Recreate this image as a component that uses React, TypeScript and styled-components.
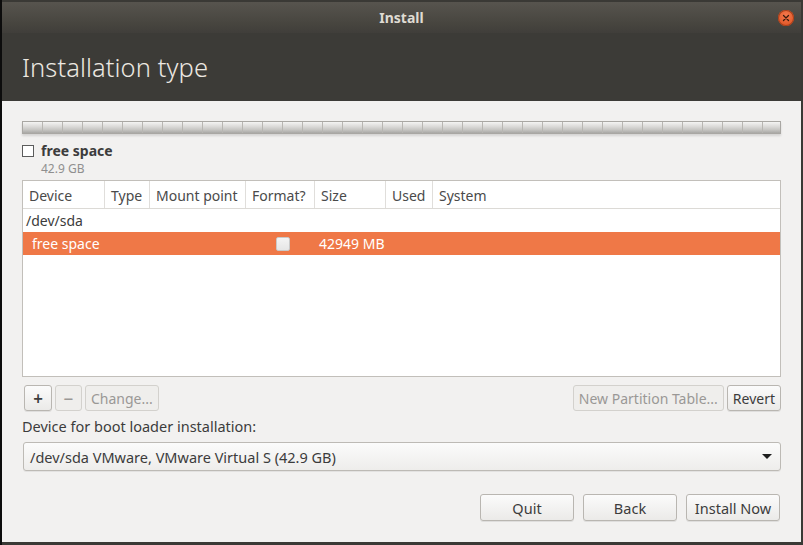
import React from "react";
import styled, { createGlobalStyle } from "styled-components";

const Global = createGlobalStyle`
  html, body { margin: 0; padding: 0; background: #3c3b37; }
  body { font-family: "Noto Sans", "Open Sans", sans-serif; }
  * { box-sizing: border-box; }
`;

const Frame = styled.div`
  width: 803px;
  height: 545px;
  background: #3a3935;
  border-left: 2px solid #0c0c0c;
  padding: 2px 2px 3px 0;
  display: flex;
  flex-direction: column;
  overflow: hidden;
`;

const Window = styled.div`
  flex: 1;
  display: flex;
  flex-direction: column;
  background: #f2f1f0;
`;

const TitleBar = styled.div`
  height: 31px;
  background: linear-gradient(#57544e, #47453f 70%, #403e3a);
  display: flex;
  align-items: center;
  justify-content: center;
  position: relative;
  color: #dfdbd2;
  font-weight: bold;
  font-size: 14px;
`;

const CloseBtn = styled.div`
  position: absolute;
  right: 7px;
  top: 8px;
  width: 16px;
  height: 16px;
  border-radius: 50%;
  background: radial-gradient(circle at 50% 35%, #f47a4e, #e35a2a 70%);
  box-shadow: 0 0 0 1px #a7401c inset;
  display: flex;
  align-items: center;
  justify-content: center;
`;

const Header = styled.div`
  height: 68px;
  background: #3c3b37;
  padding: 17px 20px 0;
  color: #ece8e1;
  font-size: 25.5px;
  font-weight: 300;
  letter-spacing: 0.1px;
`;

const Content = styled.div`
  flex: 1;
  padding: 20px 20px 0 20px;
  display: flex;
  flex-direction: column;
`;

const PartBar = styled.div`
  height: 13px;
  border: 1px solid #a9a7a3;
  background-image:
    repeating-linear-gradient(90deg, transparent 0, transparent 19px, #b8b6b2 19px, #b8b6b2 20px),
    linear-gradient(#f4f4f3, #dcdbd9 40%, #c7c6c3 70%, #a9a8a5);
  box-shadow: 0 2px 2px rgba(0, 0, 0, 0.12);
`;

const Legend = styled.div`
  margin-top: 7px;
  display: flex;
  gap: 7px;
`;

const LegendBox = styled.div`
  width: 12px;
  height: 12px;
  border: 1px solid #5c5c5c;
  background: #fff;
  margin-top: 4px;
`;

const LegendText = styled.div`
  display: flex;
  flex-direction: column;
`;

const LegendName = styled.div`
  font-weight: bold;
  font-size: 14px;
  color: #3c3c3c;
  line-height: 20px;
`;

const LegendSize = styled.div`
  font-size: 12px;
  color: #8f8f8f;
  line-height: 17px;
  margin-top: -1px;
`;

const Table = styled.div`
  margin-top: 3px;
  height: 197px;
  border: 1px solid #c2bfba;
  background: #fff;
`;

const cols = "82px 45px 96px 69px 71px 47px 1fr";

const HeadRow = styled.div`
  height: 28px;
  display: grid;
  grid-template-columns: ${cols};
  border-bottom: 1px solid #dcdad6;
`;

const HeadCell = styled.div<{ $last?: boolean }>`
  font-size: 14px;
  color: #4a4a4a;
  padding: 5px 0 0 6px;
  border-right: ${(p) => (p.$last ? "none" : "1px solid #e0dedb")};
  white-space: nowrap;
`;

const Row = styled.div<{ $sel?: boolean }>`
  height: 23px;
  display: grid;
  grid-template-columns: ${cols};
  align-items: center;
  font-size: 14px;
  background: ${(p) => (p.$sel ? "#ef7847" : "transparent")};
  color: ${(p) => (p.$sel ? "#ffffff" : "#3c3c3c")};
`;

const Cell = styled.div<{ $pad?: number; $center?: boolean }>`
  padding-left: ${(p) => p.$pad ?? 4}px;
  white-space: nowrap;
  display: flex;
  justify-content: ${(p) => (p.$center ? "center" : "flex-start")};
`;

const Wide = styled.div`
  grid-column: 1 / -1;
  padding-left: 3px;
`;

const RowCheck = styled.div`
  width: 14px;
  height: 14px;
  border: 1px solid #c9c9c9;
  border-radius: 2px;
  background: linear-gradient(#f4f4f4, #e6e6e6);
`;

const ToolRow = styled.div`
  margin-top: 8px;
  display: flex;
  align-items: center;
  gap: 3px;
  padding-left: 2px;
`;

const Spacer = styled.div`
  flex: 1;
`;

const SmallBtn = styled.button<{ $disabled?: boolean; $w?: number; $big?: boolean }>`
  height: 26px;
  min-width: ${(p) => p.$w ?? 0}px;
  padding: 0 5px;
  font-family: inherit;
  font-size: ${(p) => (p.$big ? 17 : 14)}px;
  font-weight: ${(p) => (p.$big ? 600 : 400)};
  border-radius: 3px;
  border: 1px solid ${(p) => (p.$disabled ? "#d3d1cd" : "#b9b6b1")};
  background: ${(p) =>
    p.$disabled ? "#efeeec" : "linear-gradient(#fbfbfb, #ebeae8)"};
  color: ${(p) => (p.$disabled ? "#9a9896" : "#3c3c3c")};
  box-shadow: ${(p) => (p.$disabled ? "none" : "0 1px 0 rgba(0,0,0,0.08)")};
  display: flex;
  align-items: center;
  justify-content: center;
`;

const Label = styled.div`
  margin-top: 5px;
  font-size: 14.5px;
  color: #3c3c3c;
`;

const Combo = styled.div`
  margin-top: 6px;
  margin-left: 1px;
  height: 29px;
  border: 1px solid #bdbab5;
  border-radius: 3px;
  background: linear-gradient(#fbfbfb, #eeedeb);
  display: flex;
  align-items: center;
  padding: 0 8px 0 6px;
  font-size: 14.5px;
  color: #3c3c3c;
  box-shadow: 0 1px 0 rgba(0,0,0,0.06);
`;

const Arrow = styled.div`
  width: 0;
  height: 0;
  border-left: 5px solid transparent;
  border-right: 5px solid transparent;
  border-top: 5px solid #1e1e1e;
`;

const Footer = styled.div`
  margin-top: 23px;
  display: flex;
  justify-content: flex-end;
  gap: 9px;
  padding-right: 1px;
`;

const FootBtn = styled.button`
  width: 94px;
  height: 27px;
  font-family: inherit;
  font-size: 14.5px;
  color: #3c3c3c;
  border-radius: 3px;
  border: 1px solid #b9b6b1;
  background: linear-gradient(#fbfbfb, #ebeae8);
  box-shadow: 0 1px 0 rgba(0,0,0,0.08);
`;

export default function App() {
  return (
    <>
      <Global />
      <Frame>
        <Window>
          <TitleBar>
            Install
            <CloseBtn>
              <svg width="8" height="8" viewBox="0 0 8 8">
                <path d="M1.5 1.5 L6.5 6.5 M6.5 1.5 L1.5 6.5" stroke="#3a1a0c" strokeWidth="1.3" strokeLinecap="round" />
              </svg>
            </CloseBtn>
          </TitleBar>
          <Header>Installation type</Header>
          <Content>
            <PartBar />
            <Legend>
              <LegendBox />
              <LegendText>
                <LegendName>free space</LegendName>
                <LegendSize>42.9 GB</LegendSize>
              </LegendText>
            </Legend>
            <Table>
              <HeadRow>
                <HeadCell>Device</HeadCell>
                <HeadCell>Type</HeadCell>
                <HeadCell>Mount point</HeadCell>
                <HeadCell>Format?</HeadCell>
                <HeadCell>Size</HeadCell>
                <HeadCell>Used</HeadCell>
                <HeadCell $last>System</HeadCell>
              </HeadRow>
              <Row>
                <Wide>/dev/sda</Wide>
              </Row>
              <Row $sel>
                <Cell $pad={9}>free space</Cell>
                <Cell />
                <Cell />
                <Cell $center>
                  <RowCheck />
                </Cell>
                <Cell $pad={4}>42949 MB</Cell>
                <Cell />
                <Cell />
              </Row>
            </Table>
            <ToolRow>
              <SmallBtn $w={28} $big>+</SmallBtn>
              <SmallBtn $w={27} $disabled $big>−</SmallBtn>
              <SmallBtn $disabled>Change...</SmallBtn>
              <Spacer />
              <SmallBtn $disabled>New Partition Table...</SmallBtn>
              <SmallBtn>Revert</SmallBtn>
            </ToolRow>
            <Label>Device for boot loader installation:</Label>
            <Combo>
              /dev/sda VMware, VMware Virtual S (42.9 GB)
              <Spacer />
              <Arrow />
            </Combo>
            <Footer>
              <FootBtn>Quit</FootBtn>
              <FootBtn>Back</FootBtn>
              <FootBtn>Install Now</FootBtn>
            </Footer>
          </Content>
        </Window>
      </Frame>
    </>
  );
}
